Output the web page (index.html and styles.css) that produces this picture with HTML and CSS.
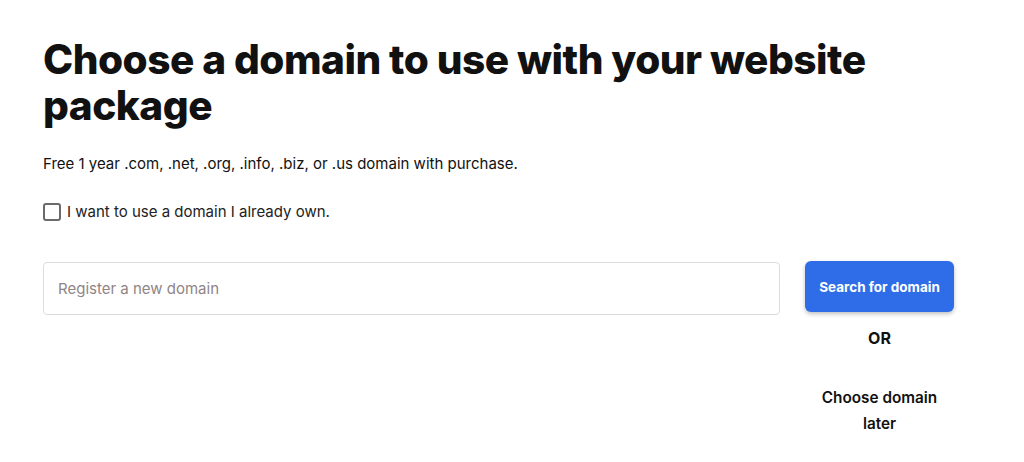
FILE: index.html
```html
<!DOCTYPE html>
<html>
<head>
<meta name="viewport" content="width=device-width, initial-scale=1">
<link rel="stylesheet" href="styles.css">
</head>
<body>

<div class="page">
  <h1 class="title">Choose a domain to use with your website package</h1>
  <p class="lead">Free 1 year .com, .net, .org, .info, .biz, or .us domain with purchase.</p>

  <label class="own">
    <input type="checkbox" class="own-box">
    <span>I want to use a domain I already own.</span>
  </label>

  <div class="search-row">
    <input type="text" class="domain-input" placeholder="Register a new domain">
    <div class="actions">
      <button class="search-btn">Search for domain</button>
      <div class="or">OR</div>
      <a class="later">Choose domain later</a>
    </div>
  </div>
</div>

</body>
</html>
```

FILE: styles.css
```css
body {
  margin: 0;
  background: #fff;
  color: #111;
  font-family: Inter, "Noto Sans", sans-serif;
}

* {
  box-sizing: border-box;
}

.page {
  padding: 37px 0 0 43px;
  width: 954px;
}

/* Big heading */
.title {
  margin: 0;
  font-size: 40.6px;
  line-height: 46px;
  font-weight: 800;
  letter-spacing: -0.5px;
  color: #111;
  max-width: 880px;
}

.lead {
  margin: 23px 0 0;
  font-size: 15px;
  line-height: 24px;
}

/* "already own" checkbox */
.own {
  display: flex;
  align-items: center;
  gap: 6px;
  margin-top: 26px;
  font-size: 15px;
  color: #222;
}

.own-box {
  -webkit-appearance: none;
  appearance: none;
  margin: 0;
  width: 18px;
  height: 18px;
  border: 2px solid #6b6b6b;
  border-radius: 3px;
  background: #fff;
}

.search-row {
  display: flex;
  align-items: flex-start;
  gap: 25px;
  margin-top: 40px;
}

.domain-input {
  flex: 1;
  height: 53px;
  margin-top: 1px;
  padding: 0 14px;
  border: 1px solid #dcdcdc;
  border-radius: 4px;
  font-family: inherit;
  font-size: 15px;
  color: #111;
}

.domain-input::placeholder {
  color: #8f8585;
}

.actions {
  width: 149px;
  display: flex;
  flex-direction: column;
  align-items: center;
}

.search-btn {
  width: 149px;
  height: 51px;
  border: none;
  border-radius: 6px;
  background: #2f6de8;
  color: #fff;
  font-family: inherit;
  font-size: 13.5px;
  font-weight: 700;
  box-shadow: 0 2px 4px rgba(0, 0, 0, 0.25);
  cursor: pointer;
}

.or {
  margin-top: 14px;
  font-size: 16px;
  font-weight: 700;
  line-height: 24px;
}

.later {
  margin-top: 35px;
  width: 130px;
  text-align: center;
  font-size: 15.3px;
  font-weight: 600;
  line-height: 26px;
  cursor: pointer;
}
```
